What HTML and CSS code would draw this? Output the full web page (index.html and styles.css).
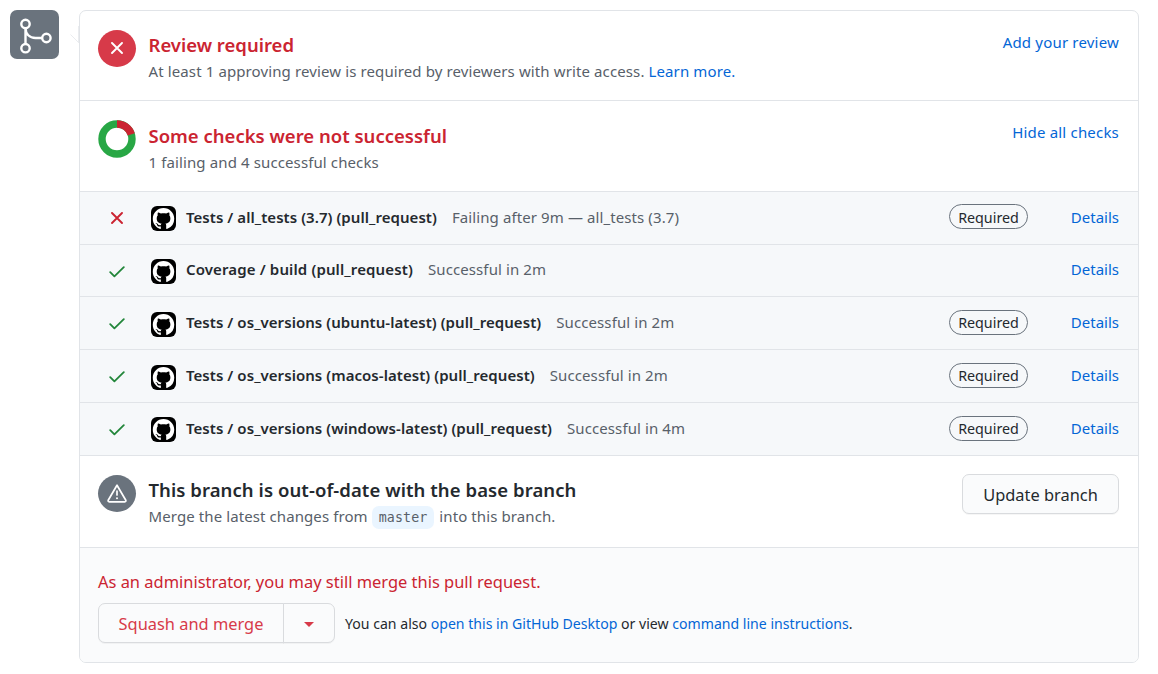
FILE: index.html
```html
<!DOCTYPE html>
<html lang="en">
<head>
<meta charset="utf-8">
<title>Merge status</title>
<link rel="stylesheet" href="styles.css">
</head>
<body>
<svg class="defs" aria-hidden="true">
  <symbol id="mark" viewBox="0 0 25 25">
    <rect width="25" height="25" rx="6" fill="#000"/>
    <path transform="translate(1.800 2) scale(1.340)" fill="#fff" d="M8 0C3.58 0 0 3.58 0 8c0 3.54 2.29 6.53 5.47 7.59.4.07.55-.17.55-.38 0-.19-.01-.82-.01-1.49-2.01.37-2.53-.49-2.69-.94-.09-.23-.48-.94-.82-1.13-.28-.15-.68-.52-.01-.53.63-.01 1.08.58 1.23.82.72 1.21 1.87.87 2.33.66.07-.52.28-.87.51-1.07-1.78-.2-3.64-.89-3.64-3.95 0-.87.31-1.59.82-2.15-.08-.2-.36-1.02.08-2.12 0 0 .67-.21 2.2.82.64-.18 1.32-.27 2-.27s1.36.09 2 .27c1.53-1.04 2.2-.82 2.2-.82.44 1.1.16 1.92.08 2.12.51.56.82 1.27.82 2.15 0 3.07-1.87 3.75-3.65 3.95.29.25.54.73.54 1.48 0 1.07-.01 1.93-.01 2.2 0 .21.15.46.55.38A8.01 8.01 0 0 0 16 8c0-4.42-3.58-8-8-8z"/>
  </symbol>
  <symbol id="check" viewBox="0 0 16 12"><path d="M1.2 6.2 5.4 10.4 14.8 1.2" fill="none" stroke="#22863a" stroke-width="1.8" stroke-linecap="round" stroke-linejoin="round"/></symbol>
  <symbol id="cross" viewBox="0 0 12 12"><path d="M1 1 11 11M11 1 1 11" fill="none" stroke="currentColor" stroke-width="1.9" stroke-linecap="round"/></symbol>
</svg>
<main class="merge">
  <div class="badge">
    <svg width="49" height="49" viewBox="0 0 49 49" fill="none" stroke="#fff" stroke-width="2.400"><circle cx="15.500" cy="14" r="4.200"/><circle cx="15.500" cy="38.200" r="4.200"/><circle cx="36.400" cy="28" r="4.200"/><path d="M15.500 18v16M15.500 18c0 6 4 10 10 10h7"/></svg>
  </div>
  <section class="card">
    <svg class="caret" width="10" height="18" viewBox="0 0 10 18" fill="none" stroke="#eaecef"><path d="M.5 8.500 9 17M8.500 0V17"/></svg>
    <div class="item">
      <span class="status red"><svg class="up" width="12" height="12"><use href="#cross"/></svg></span>
      <div class="text">
        <h3 class="title danger">Review required</h3>
        <p class="sub">At least 1 approving review is required by reviewers with write access. <a>Learn more.</a></p>
      </div>
      <a class="action">Add your review</a>
    </div>
    <div class="item second">
      <svg class="donut" width="38" height="38" viewBox="0 0 38 38" fill="none" stroke-width="7.400"><circle cx="19" cy="19" r="15" stroke="#28a745"/><path d="M19 4A15 15 0 0 1 33.270 14.360" stroke="#cb2431"/></svg>
      <div class="text">
        <h3 class="title danger">Some checks were not successful</h3>
        <p class="sub">1 failing and 4 successful checks</p>
      </div>
      <a class="action">Hide all checks</a>
    </div>
    <ul class="checks">
      <li class="check"><span class="state fail"><svg width="12" height="12"><use href="#cross"/></svg></span><svg class="mark"><use href="#mark"/></svg><strong class="name">Tests / all_tests (3.7) (pull_request)</strong><span class="note">Failing after 9m — all_tests (3.7)</span><span class="required first">Required</span><a class="details">Details</a></li>
      <li class="check short"><span class="state"><svg width="16" height="12"><use href="#check"/></svg></span><svg class="mark"><use href="#mark"/></svg><strong class="name">Coverage / build (pull_request)</strong><span class="note">Successful in 2m</span><a class="details">Details</a></li>
      <li class="check"><span class="state"><svg width="16" height="12"><use href="#check"/></svg></span><svg class="mark low"><use href="#mark"/></svg><strong class="name">Tests / os_versions (ubuntu-latest) (pull_request)</strong><span class="note">Successful in 2m</span><span class="required">Required</span><a class="details">Details</a></li>
      <li class="check"><span class="state"><svg width="16" height="12"><use href="#check"/></svg></span><svg class="mark low"><use href="#mark"/></svg><strong class="name">Tests / os_versions (macos-latest) (pull_request)</strong><span class="note">Successful in 2m</span><span class="required">Required</span><a class="details">Details</a></li>
      <li class="check"><span class="state"><svg width="16" height="12"><use href="#check"/></svg></span><svg class="mark"><use href="#mark"/></svg><strong class="name">Tests / os_versions (windows-latest) (pull_request)</strong><span class="note">Successful in 4m</span><span class="required">Required</span><a class="details">Details</a></li>
    </ul>
    <div class="item branch">
      <span class="status gray"><svg class="up" width="20" height="19" viewBox="0 0 20 19" fill="none" stroke="#fff" stroke-width="1.700" stroke-linejoin="round" stroke-linecap="round"><path d="M10 1.200 1.200 16.200Q.8 17.800 2.200 17.800H17.800Q19.200 17.800 18.800 16.200Z"/><path d="M10 7v4"/><path d="M10 14.200v.1" stroke-width="2"/></svg></span>
      <div class="text">
        <h3 class="title wide">This branch is out-of-date with the base branch</h3>
        <p class="sub">Merge the latest changes from <code class="ref">master</code> into this branch.</p>
      </div>
      <button class="btn update">Update branch</button>
    </div>
    <footer class="foot">
      <p class="admin">As an administrator, you may still merge this pull request.</p>
      <div class="row">
        <div class="group"><button class="btn squash">Squash and merge</button><button class="btn drop" aria-label="Select merge method"><svg width="10" height="5" viewBox="0 0 10 5"><path d="M0 0H10L5 5Z" fill="#d73a49"/></svg></button></div>
        <p class="hint">You can also <a>open this in GitHub Desktop</a> or view <a>command line instructions</a>.</p>
      </div>
    </footer>
  </section>
</main>
</body>
</html>
```
FILE: styles.css
```css
* { box-sizing: border-box; }
body { margin: 0; background: #fff; color: #24292e; font: 15px/24px "Noto Sans", "Open Sans", sans-serif; }
h3, p, ul { margin: 0; padding: 0; }
a { color: #0366d6; white-space: nowrap; }
svg { display: block; flex: none; }
.defs { position: absolute; width: 0; height: 0; }
.merge { display: flex; align-items: flex-start; gap: 20px; padding: 10px 19px 0 10px; }
.badge { width: 49px; height: 49px; flex: none; border-radius: 7px; background: #6a737d; }
.card { position: relative; flex: 1; height: 653px; border: 1px solid #e1e4e8; border-radius: 7px; }
.caret { position: absolute; left: -10px; top: 15px; }
.item { display: flex; align-items: flex-start; height: 90px; padding: 18px 19px 0 18px; border-bottom: 1px solid #e1e4e8; }
.second { height: 91px; padding-top: 19px; }
.second .action { margin-top: -1px; }
.status { display: flex; align-items: center; justify-content: center; width: 38px; height: 37px; margin-top: 1px; flex: none; border-radius: 50%; color: #fff; }
.up { margin-bottom: 1px; }
.red { background: #d73a49; }
.gray { background: #6a737d; }
.text { flex: 1; margin-left: 12.500px; white-space: nowrap; }
.title { margin-top: 3px; font-size: 18.500px; font-weight: 600; line-height: 26px; }
.wide { letter-spacing: .07px; }
.danger { color: #cb2431; }
.sub { color: #586069; line-height: 26px; letter-spacing: .115px; }
.branch .sub { letter-spacing: .095px; }
.action { line-height: 26px; letter-spacing: .19px; }
.checks { list-style: none; }
.check { display: flex; align-items: center; height: 53px; padding: 0 19px 0 18px; border-bottom: 1px solid #e1e4e8; background: #f6f8fa; white-space: nowrap; }
.short { height: 52px; }
.state { display: flex; justify-content: center; width: 38px; padding-top: 1px; color: #cb2431; }
.short .state { padding-top: 2px; }
.state.fail { padding-top: 0; }
.mark { width: 25px; height: 25px; margin: 1px 10px 0 15px; }
.low { margin-top: 3px; }
.name, .note, .details { padding-bottom: 2px; }
.short .name, .short .note, .short .details { padding-bottom: 3px; }
.name { font-weight: 600; letter-spacing: .055px; }
.short .name { letter-spacing: .13px; }
.note { margin-left: 15px; color: #586069; letter-spacing: .1px; }
.required { margin: 0 0 1px auto; width: 79px; height: 25px; border: 1px solid #6a737d; border-radius: 13px; line-height: 24px; font-size: 14.300px; text-align: center; }
.required.first { margin-bottom: 3px; line-height: 25px; }
.details { width: 91px; text-align: right; }
.short .details { margin-left: auto; }
.branch { height: 92px; }
.ref { display: inline-block; height: 23px; margin: 0 1px 0 0; padding: 0 7px; border-radius: 7px; background: #eaf5ff; color: #586069; font: 13.300px/23px "DejaVu Sans Mono", monospace; }
.btn { height: 40px; padding: 0; border: 1px solid #d9dbde; border-radius: 7px; background: #fafbfc; box-shadow: 0 1px 0 rgba(27,31,35,.04); color: #24292e; font: 16.400px/37px "Noto Sans", "Open Sans", sans-serif; }
.update { width: 157px; padding-top: 1px; }
.foot { height: 114px; padding: 21px 18px 0; border-radius: 0 0 6px 6px; background: #fafbfc; }
.admin { color: #cb2431; font-size: 16.450px; line-height: 26px; }
.row { display: flex; align-items: center; gap: 10px; margin-top: 8px; white-space: nowrap; }
.group { display: flex; }
.squash { width: 186px; padding-top: 1px; border-radius: 7px 0 0 7px; color: #d73a49; }
.drop { display: flex; align-items: center; justify-content: center; width: 52px; padding-top: 2px; margin-left: -1px; border-radius: 0 7px 7px 0; }
.hint { padding-top: 2px; font-size: 14.100px; }
```
